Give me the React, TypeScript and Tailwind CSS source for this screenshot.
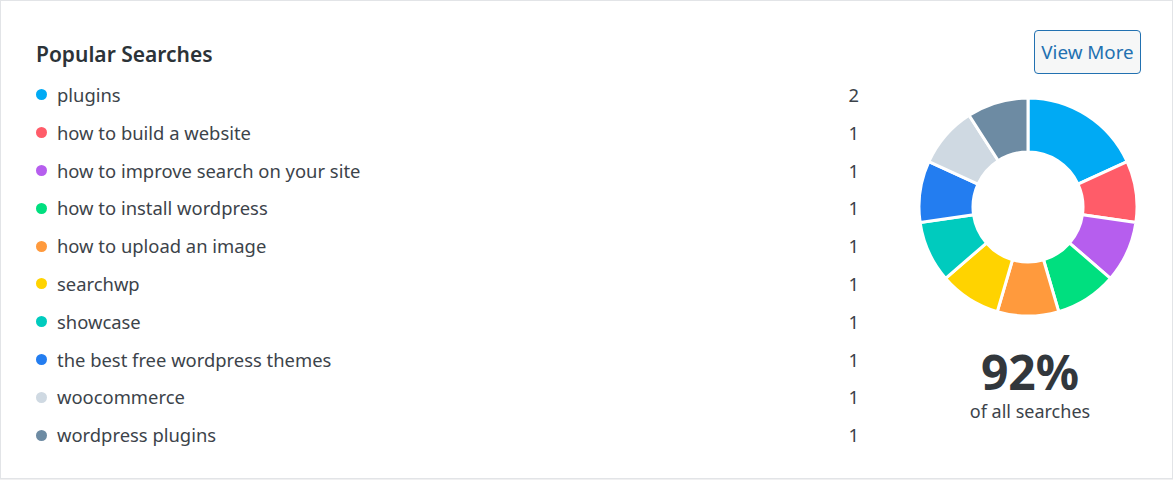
const searches = [
  { label: "plugins", count: 2, color: "#00aaf4" },
  { label: "how to build a website", count: 1, color: "#ff5c69" },
  { label: "how to improve search on your site", count: 1, color: "#b65eee" },
  { label: "how to install wordpress", count: 1, color: "#00df7f" },
  { label: "how to upload an image", count: 1, color: "#ff9a3d" },
  { label: "searchwp", count: 1, color: "#ffd300" },
  { label: "showcase", count: 1, color: "#00cbbe" },
  { label: "the best free wordpress themes", count: 1, color: "#237df0" },
  { label: "woocommerce", count: 1, color: "#cfd9e2" },
  { label: "wordpress plugins", count: 1, color: "#6d8ba3" },
];

const total = searches.reduce((s, i) => s + i.count, 0);

const point = (cx: number, cy: number, r: number, deg: number) => {
  const rad = ((deg - 90) * Math.PI) / 180;
  return [cx + r * Math.cos(rad), cy + r * Math.sin(rad)];
};

const slice = (start: number, end: number) => {
  const c = 110;
  const R = 109;
  const r = 55;
  const large = end - start > 180 ? 1 : 0;
  const [x1, y1] = point(c, c, R, start);
  const [x2, y2] = point(c, c, R, end);
  const [x3, y3] = point(c, c, r, end);
  const [x4, y4] = point(c, c, r, start);
  return `M${x1} ${y1} A${R} ${R} 0 ${large} 1 ${x2} ${y2} L${x3} ${y3} A${r} ${r} 0 ${large} 0 ${x4} ${y4} Z`;
};

const Donut = () => {
  let angle = 0;
  return (
    <svg width="220" height="220" viewBox="0 0 220 220">
      {searches.map((s) => {
        const start = angle;
        angle += (s.count / total) * 360;
        return <path key={s.label} d={slice(start, angle)} fill={s.color} stroke="#fff" strokeWidth="3" strokeLinejoin="round" />;
      })}
    </svg>
  );
};

export default function App() {
  return (
    <div className="bg-[#f0f0f1] pb-[1px]" style={{ fontFamily: '"Noto Sans", sans-serif' }}>
      <div className="flex h-[479px] border border-[#e2e4e7] bg-white pl-[35px] pr-[31px] pt-[29px] text-[#3c434a]">
        <div className="flex-1 pr-[60px]">
          <h2 className="mt-[10px] text-[21px] leading-[28px] font-semibold text-[#2c3338]">Popular Searches</h2>
          <ul className="mt-[8px]">
            {searches.map((s) => (
              <li key={s.label} className="flex h-[37.8px] items-center text-[18.4px]">
                <span className="mr-[10px] h-[11px] w-[11px] rounded-full" style={{ backgroundColor: s.color }} />
                <span className="flex-1">{s.label}</span>
                <span>{s.count}</span>
              </li>
            ))}
          </ul>
        </div>
        <div className="flex w-[222px] flex-col items-center">
          <button className="self-end h-[44px] w-[107px] rounded-[4px] border border-[#2271b1] bg-[#f6f7f7] text-[18.8px] text-[#2271b1]">
            View More
          </button>
          <div className="mt-[23px] mr-[4px]">
            <Donut />
          </div>
          <div className="mt-[31px] text-[48px] leading-[48px] font-bold text-[#32373c]">92%</div>
          <div className="text-[18px] leading-[30px] text-[#3c434a]">of all searches</div>
        </div>
      </div>
    </div>
  );
}
